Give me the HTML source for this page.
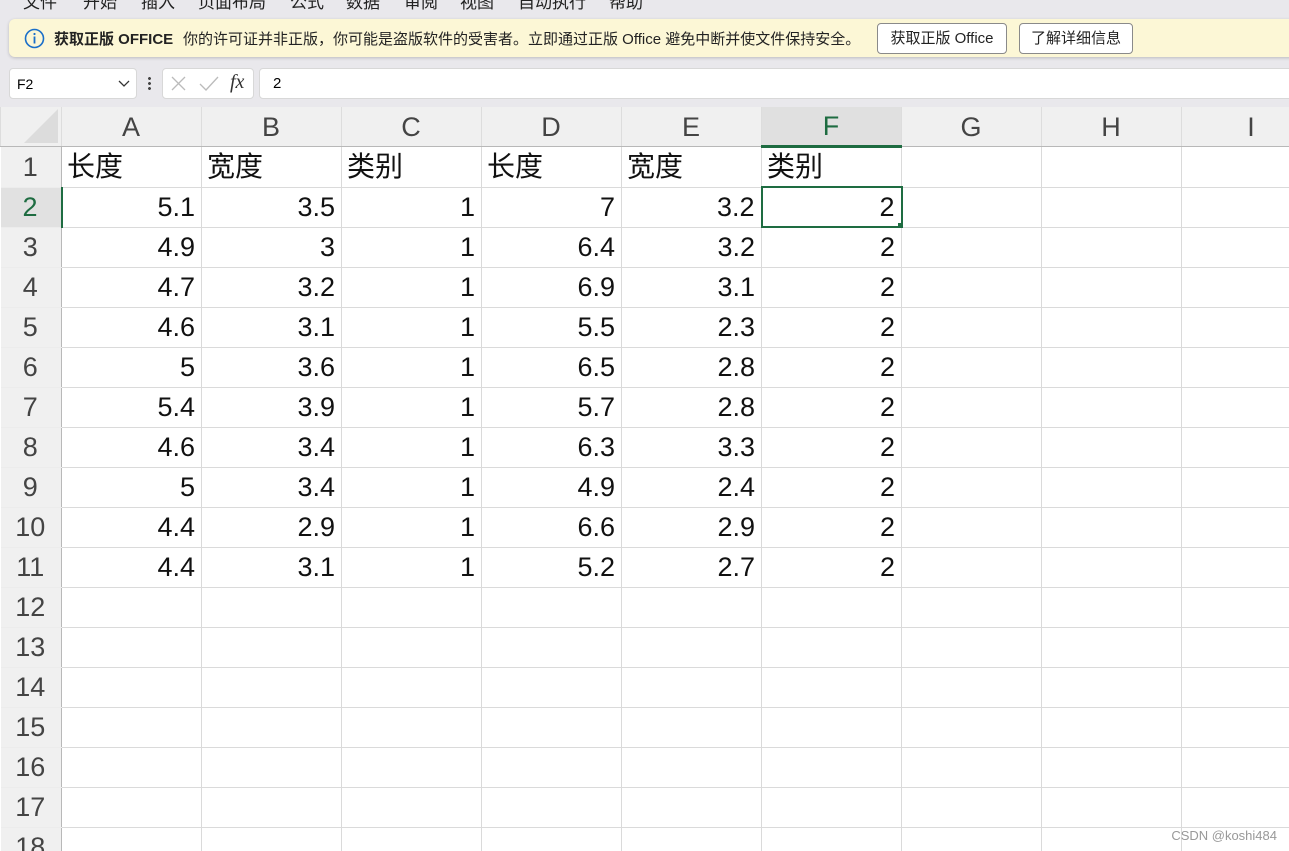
<!DOCTYPE html>
<html><head><meta charset="utf-8"><style>
*{margin:0;padding:0;box-sizing:border-box}
html,body{width:1289px;height:851px;overflow:hidden}
body{background:#e9e8ec;font-family:"Liberation Sans","Noto Sans CJK SC",sans-serif;position:relative}
.menu{position:absolute;top:-12px;left:0;font-size:17px;color:#222;white-space:nowrap}
.menu span{position:absolute;top:0}
.banner{position:absolute;left:9px;top:19px;width:1290px;height:38px;background:#fcf7d6;border-radius:6px;box-shadow:0 1px 3px rgba(0,0,0,.2)}
.banner .t{position:absolute;top:9px;font-size:15px;color:#222;white-space:nowrap}
.btn{position:absolute;top:4px;height:31px;border:1px solid #8a8a8a;border-radius:4px;background:#fff;font-size:15px;color:#222;line-height:29px;text-align:center}
.box{position:absolute;top:68px;height:31px;background:#fff;border:1px solid #d8d8d8;border-radius:4px}
.grid{position:absolute;left:0;top:107px;width:1289px;height:744px;background:#fff;overflow:hidden}
table{border-collapse:collapse;table-layout:fixed;position:absolute;left:0;top:0;width:1321px}
td{height:40px;border:1px solid #dadada;font-size:27px;padding:0 6px 0 5px;text-align:right;color:#111;overflow:hidden;white-space:nowrap;line-height:38px}
td.h{background:#f0f0f0;color:#444;text-align:center;border-left:none;border-right:1px solid #b8b8b8;border-top:1px solid #ececec;border-bottom:1px solid #ececec}
tr.ch td{height:39px;background:#f0f0f0;color:#444;text-align:center;border-top:none;border-bottom:1px solid #b8b8b8;border-left:1px solid #ddd;border-right:1px solid #ddd}
td.l{text-align:left;font-size:28px}
</style></head><body>
<div class="menu">
<span style="left:23px">文件</span><span style="left:83px">开始</span><span style="left:141px">插入</span><span style="left:198px">页面布局</span><span style="left:290px">公式</span><span style="left:346px">数据</span><span style="left:404px">审阅</span><span style="left:460px">视图</span><span style="left:518px">自动执行</span><span style="left:609px">帮助</span>
</div>
<div class="banner">
<svg style="position:absolute;left:15px;top:9px" width="21" height="21" viewBox="0 0 21 21"><circle cx="10.5" cy="10.5" r="9" fill="none" stroke="#1a6fc9" stroke-width="1.6"/><rect x="9.6" y="8.5" width="1.8" height="7" fill="#1a6fc9"/><circle cx="10.5" cy="6" r="1.1" fill="#1a6fc9"/></svg>
<span class="t" style="left:45px;font-weight:bold">获取正版 OFFICE</span>
<span class="t" style="left:174px">你的许可证并非正版，你可能是盗版软件的受害者。立即通过正版 Office 避免中断并使文件保持安全。</span>
<div class="btn" style="left:868px;width:130px">获取正版 Office</div>
<div class="btn" style="left:1010px;width:114px">了解详细信息</div>
</div>
<div class="box" style="left:9px;width:128px"><span style="position:absolute;left:7px;top:7px;font-size:14px">F2</span><svg style="position:absolute;left:108px;top:11px" width="12" height="8"><path d="M1 1L6 6L11 1" fill="none" stroke="#333" stroke-width="1.3"/></svg></div>
<div style="position:absolute;left:148px;top:76px;width:3px;height:15px;background:radial-gradient(circle,#444 1.3px,transparent 1.6px) 0 0/3px 5px"></div>
<div class="box" style="left:162px;width:92px"><svg width="92" height="29"><path d="M9 8L22 21M22 8L9 21" stroke="#bbb" stroke-width="1.3"/><path d="M37 15L43 21L55 8" fill="none" stroke="#bbb" stroke-width="1.3"/></svg><span style="position:absolute;left:67px;top:2px;font-family:'Liberation Serif',serif;font-style:italic;font-size:20px;color:#333">fx</span></div>
<div class="box" style="left:259px;width:1040px"><span style="position:absolute;left:13px;top:6px;font-size:15px">2</span></div>
<div class="grid">
<table>
<colgroup><col style="width:61px"><col style="width:140px"><col style="width:140px"><col style="width:140px"><col style="width:140px"><col style="width:140px"><col style="width:140px"><col style="width:140px"><col style="width:140px"><col style="width:140px"></colgroup>
<tr class="ch"><td style="position:relative;background:#f0f0f0"><svg style="position:absolute;right:3px;bottom:3px" width="34" height="34"><path d="M34 0L34 34L0 34Z" fill="#dcdcdc"/></svg></td><td>A</td><td>B</td><td>C</td><td>D</td><td>E</td><td style="background:#e0e0e0;color:#1e6c41;border-bottom:3px solid #1e6c41">F</td><td>G</td><td>H</td><td>I</td></tr>
<tr><td class="h">1</td><td class="l">长度</td><td class="l">宽度</td><td class="l">类别</td><td class="l">长度</td><td class="l">宽度</td><td class="l">类别</td><td></td><td></td><td></td></tr>
<tr><td class="h" style="background:#e1e1e1;color:#1e6c41;border-right:2px solid #1e6c41">2</td><td>5.1</td><td>3.5</td><td>1</td><td>7</td><td>3.2</td><td style="border:2px solid #1e6c41;position:relative">2<div style="position:absolute;right:-2px;bottom:-2px;width:6px;height:6px;background:#1e6c41;border:1px solid #fff"></div></td><td></td><td></td><td></td></tr>
<tr><td class="h">3</td><td>4.9</td><td>3</td><td>1</td><td>6.4</td><td>3.2</td><td>2</td><td></td><td></td><td></td></tr>
<tr><td class="h">4</td><td>4.7</td><td>3.2</td><td>1</td><td>6.9</td><td>3.1</td><td>2</td><td></td><td></td><td></td></tr>
<tr><td class="h">5</td><td>4.6</td><td>3.1</td><td>1</td><td>5.5</td><td>2.3</td><td>2</td><td></td><td></td><td></td></tr>
<tr><td class="h">6</td><td>5</td><td>3.6</td><td>1</td><td>6.5</td><td>2.8</td><td>2</td><td></td><td></td><td></td></tr>
<tr><td class="h">7</td><td>5.4</td><td>3.9</td><td>1</td><td>5.7</td><td>2.8</td><td>2</td><td></td><td></td><td></td></tr>
<tr><td class="h">8</td><td>4.6</td><td>3.4</td><td>1</td><td>6.3</td><td>3.3</td><td>2</td><td></td><td></td><td></td></tr>
<tr><td class="h">9</td><td>5</td><td>3.4</td><td>1</td><td>4.9</td><td>2.4</td><td>2</td><td></td><td></td><td></td></tr>
<tr><td class="h">10</td><td>4.4</td><td>2.9</td><td>1</td><td>6.6</td><td>2.9</td><td>2</td><td></td><td></td><td></td></tr>
<tr><td class="h">11</td><td>4.4</td><td>3.1</td><td>1</td><td>5.2</td><td>2.7</td><td>2</td><td></td><td></td><td></td></tr>
<tr><td class="h">12</td><td></td><td></td><td></td><td></td><td></td><td></td><td></td><td></td><td></td></tr>
<tr><td class="h">13</td><td></td><td></td><td></td><td></td><td></td><td></td><td></td><td></td><td></td></tr>
<tr><td class="h">14</td><td></td><td></td><td></td><td></td><td></td><td></td><td></td><td></td><td></td></tr>
<tr><td class="h">15</td><td></td><td></td><td></td><td></td><td></td><td></td><td></td><td></td><td></td></tr>
<tr><td class="h">16</td><td></td><td></td><td></td><td></td><td></td><td></td><td></td><td></td><td></td></tr>
<tr><td class="h">17</td><td></td><td></td><td></td><td></td><td></td><td></td><td></td><td></td><td></td></tr>
<tr><td class="h">18</td><td></td><td></td><td></td><td></td><td></td><td></td><td></td><td></td><td></td></tr>
</table>
</div>
<div style="position:absolute;right:12px;top:828px;font-size:13px;color:#999">CSDN @koshi484</div>
</body></html>
